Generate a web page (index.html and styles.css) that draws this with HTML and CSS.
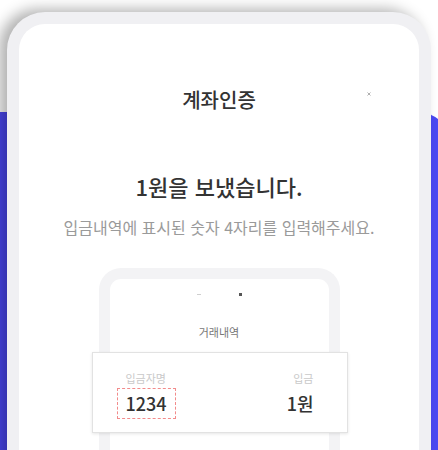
FILE: index.html
```html
<!DOCTYPE html>
<html lang="ko">
<head>
<meta charset="utf-8">
<title>계좌인증</title>
<link rel="stylesheet" href="styles.css">
</head>
<body>
<div class="stage">
  <div class="blue-bg"></div>
  <div class="phone">
    <div class="header">
      <h1 class="title">계좌인증</h1>
      <svg class="close" width="4" height="4" viewBox="0 0 4 4" aria-hidden="true"><path d="M0.5 0.5L3.5 3.5M3.5 0.5L0.5 3.5" stroke="#9a9a9a" stroke-width="0.8"/></svg>
    </div>
    <h2 class="heading">1원을 보냈습니다.</h2>
    <p class="sub">입금내역에 표시된 숫자 4자리를 입력해주세요.</p>
    <div class="mock">
      <div class="status"><span class="dash"></span><span class="dot"></span></div>
      <div class="mock-title">거래내역</div>
      <div class="card">
        <div class="col">
          <div class="label label-left">입금자명</div>
          <div class="code">1234</div>
        </div>
        <div class="col col-right">
          <div class="label">입금</div>
          <div class="amount">1원</div>
        </div>
      </div>
    </div>
  </div>
</div>
</body>
</html>
```
FILE: styles.css
```css
html, body {
  margin: 0;
  padding: 0;
  background: #ffffff;
}
body {
  width: 438px;
  height: 450px;
  overflow: hidden;
  font-family: "Noto Sans CJK KR", "Noto Sans", sans-serif;
  color: #333333;
}
.stage {
  position: relative;
  height: 450px;
  overflow: hidden;
  padding-top: 12px;
  box-sizing: border-box;
}
.blue-bg {
  position: absolute;
  top: 112px;
  left: -30px;
  width: 480px;
  height: 420px;
  border-radius: 32px;
  background: #4b48f2;
  z-index: 0;
}
.phone {
  position: relative;
  z-index: 1;
  margin: 0 7px;
  height: 520px;
  border: 12px solid #f0f0f3;
  border-bottom: none;
  border-radius: 38px 38px 0 0;
  background: #ffffff;
  box-shadow: -8px -3px 14px rgba(0, 0, 0, 0.3);
  text-align: center;
}
.header {
  position: relative;
  padding-top: 62px;
}
.title {
  margin: 0;
  font-size: 20px;
  line-height: 28px;
  font-weight: 500;
  color: #333333;
}
.close {
  position: absolute;
  left: 348px;
  top: 68px;
}
.heading {
  margin: 57px 0 0;
  font-size: 22px;
  line-height: 30px;
  font-weight: 500;
  color: #333333;
}
.sub {
  margin: 15px 0 0;
  font-size: 16px;
  line-height: 22px;
  color: #9a9a9a;
}
.mock {
  margin: 30px auto 0;
  width: 241px;
  height: 300px;
  box-sizing: border-box;
  border: 11px solid #f3f3f5;
  border-bottom: none;
  border-radius: 22px 22px 0 0;
  background: #ffffff;
}
.status {
  display: flex;
  justify-content: center;
  align-items: center;
  gap: 38px;
  padding-top: 14px;
  height: 3px;
}
.dash {
  width: 4px;
  height: 1px;
  background: #cfcfcf;
}
.dot {
  width: 3px;
  height: 3px;
  background: #555555;
}
.mock-title {
  margin-top: 28px;
  font-size: 11px;
  line-height: 16px;
  color: #777777;
}
.card {
  margin: 12px -19px 0 -18px;
  display: flex;
  justify-content: space-between;
  text-align: left;
  background: #ffffff;
  border: 1px solid #e2e2e2;
  box-shadow: 0 1px 3px rgba(0, 0, 0, 0.1);
  padding: 18px 33px 13px 24px;
}
.col {
  display: flex;
  flex-direction: column;
  align-items: flex-start;
}
.col-right {
  align-items: flex-end;
}
.label {
  font-size: 11px;
  line-height: 14px;
  color: #c9c9c9;
}
.label-left {
  padding-left: 9px;
}
.code {
  margin-top: 3px;
  height: 31px;
  box-sizing: border-box;
  border: 1px dashed #f28b8b;
  padding: 0 8px;
  font-size: 18px;
  line-height: 29px;
  font-weight: 500;
  color: #333333;
}
.amount {
  margin-top: 4px;
  font-size: 18px;
  line-height: 29px;
  font-weight: 500;
  color: #333333;
}
```
